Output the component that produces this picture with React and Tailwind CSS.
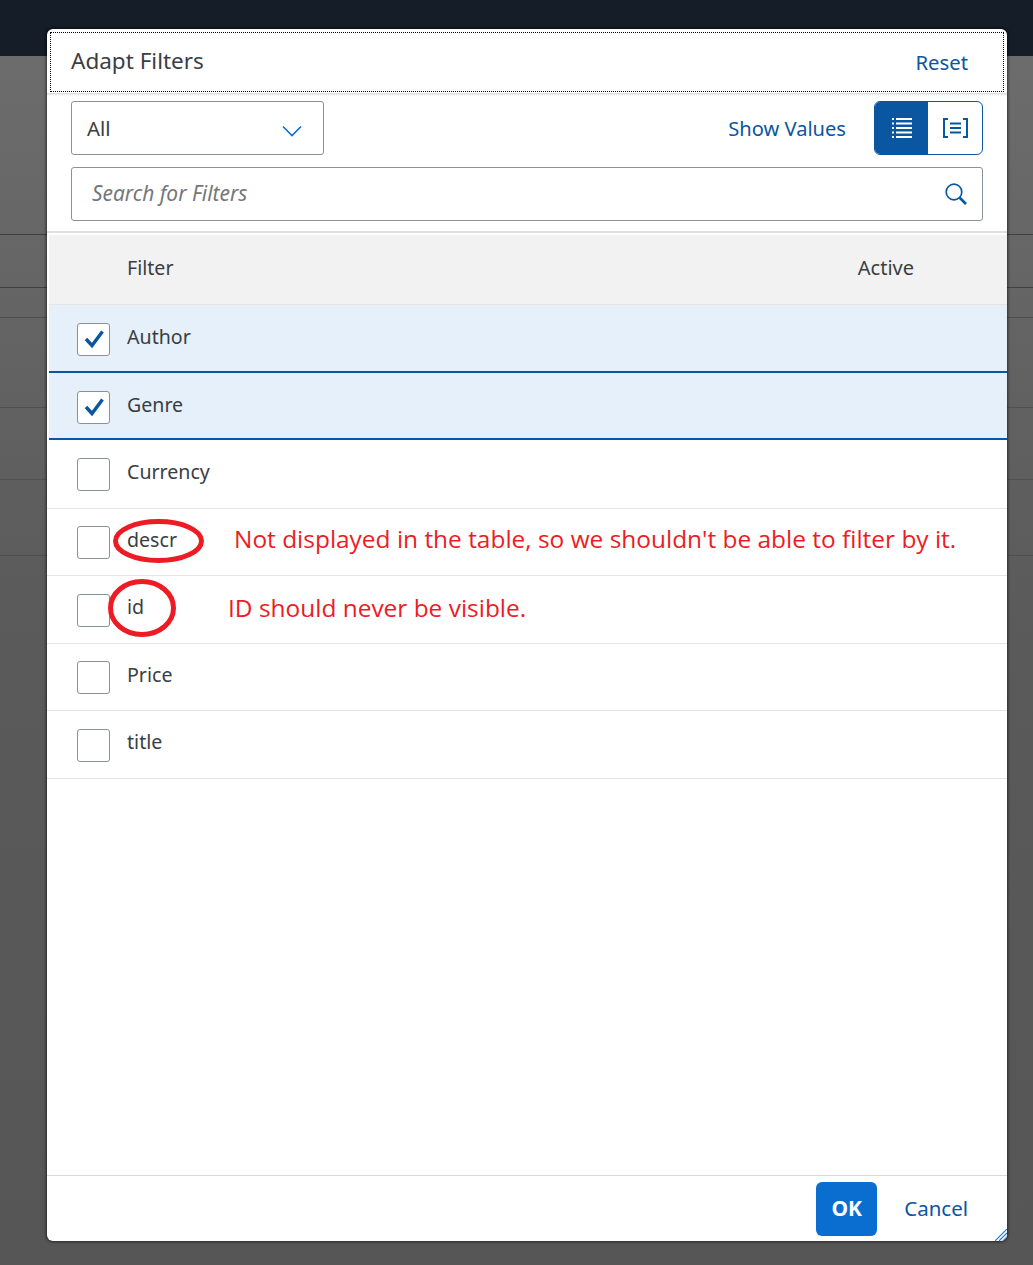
import React from "react";

const F = "[font-family:'Noto_Sans','Open_Sans',sans-serif]";

function Check({ on }) {
  return (
    <div className={`w-[33px] h-[33px] shrink-0 rounded-[3px] border border-[#89919a] bg-white flex items-center justify-center ${on ? "mt-[3px]" : "mt-[1px]"}`}>
      {on && (
        <svg width="22" height="22" viewBox="0 0 22 22" fill="none">
          <path d="M3 11 L9 17.5 L19.5 3.5" stroke="#0a56a0" strokeWidth="3.4" />
        </svg>
      )}
    </div>
  );
}

function Row({ label, on, h, children }) {
  return (
    <div
      className={`relative flex items-center text-[19.6px] text-[#3a3e42] ${h} ${
        on ? "ml-[2px] pl-[28px] bg-[#e5f0fa] border-b-2 border-[#0a56a0]" : "pl-[30px] border-b border-[#e5e5e5]"
      }`}
    >
      <Check on={on} />
      <span className={`ml-[17px] ${on ? "-mt-[2px]" : "-mt-[6px]"}`}>{label}</span>
      {children}
    </div>
  );
}

export default function App() {
  return (
    <div className={`relative w-[1033px] h-[1265px] overflow-hidden bg-gradient-to-b from-[#6e6e6e] via-[#5a5a5a] to-[#565656] ${F}`}>
      <div className="h-[56px] bg-[#141d28]" />
      <div className="h-[179px] border-b border-[#3e4042]" />
      <div className="h-[53px] border-b border-[#3e4042]" />
      <div className="h-[30px] border-b border-[#4d4d4d]" />
      <div className="h-[90px] border-b border-[#505050]" />
      <div className="h-[72px] border-b border-[#505050]" />
      <div className="h-[76px] border-b border-[#505050]" />

      <div className="absolute left-[47px] top-[29px] w-[960px] h-[1212px] bg-white rounded-[6px] shadow-[0_0_3px_1px_rgba(0,0,0,0.55)] flex flex-col overflow-hidden">
        <div className="h-[60px] shrink-0 mx-[3px] mt-[3px] border border-dotted border-black flex items-center justify-between pl-[20px] pr-[35px]">
          <span className="text-[22.5px] text-[#3a3e42] -mt-[2px]">Adapt Filters</span>
          <span className="text-[20.3px] text-[#0a56a0]">Reset</span>
        </div>
        <div className="h-[3px] shrink-0 mt-[1px] bg-gradient-to-b from-[#d9d9d9] to-white" />

        <div className="flex items-center justify-between px-[24px] mt-[5px]">
          <div className="w-[253px] h-[54px] rounded-[3px] border border-[#89919a] flex items-center justify-between pl-[15px] pr-[21px]">
            <span className="text-[20.4px] text-[#3a3e42]">All</span>
            <svg width="20" height="12" viewBox="0 0 20 12" fill="none" className="mt-[5px]">
              <path d="M1 1.5 L10 10.5 L19 1.5" stroke="#0a6ed1" strokeWidth="1.6" />
            </svg>
          </div>
          <div className="flex items-center">
            <span className="text-[20.1px] text-[#0a56a0] mr-[28px] mt-[3px]">Show Values</span>
            <div className="flex h-[54px] w-[109px] rounded-[6px] border border-[#0a56a0] overflow-hidden">
              <div className="w-[53px] bg-[#0a56a0] flex items-center justify-center">
                <svg width="20" height="20" viewBox="0 0 20 20" fill="#fff">
                  <rect x="0" y="0" width="2" height="2" />
                  <rect x="4" y="0" width="16" height="2" />
                  <rect x="0" y="4.5" width="2" height="2" />
                  <rect x="4" y="4.5" width="16" height="2" />
                  <rect x="0" y="9" width="2" height="2" />
                  <rect x="4" y="9" width="16" height="2" />
                  <rect x="0" y="13.5" width="2" height="2" />
                  <rect x="4" y="13.5" width="16" height="2" />
                  <rect x="0" y="18" width="2" height="2" />
                  <rect x="4" y="18" width="16" height="2" />
                </svg>
              </div>
              <div className="flex-1 flex items-center justify-center">
                <svg width="25" height="20" viewBox="0 0 25 20" fill="none" stroke="#0a56a0" strokeWidth="2">
                  <path d="M5 1 H1 V19 H5" />
                  <path d="M20 1 H24 V19 H20" />
                  <path d="M7 5.5 H18 M7 10 H18 M7 14.5 H18" />
                </svg>
              </div>
            </div>
          </div>
        </div>

        <div className="mx-[24px] mt-[12px] h-[54px] shrink-0 rounded-[3px] border border-[#89919a] flex items-center justify-between pl-[20px] pr-[15px]">
          <span className="text-[20.9px] italic text-[#74777a]">Search for Filters</span>
          <svg width="22" height="22" viewBox="0 0 22 22" fill="none" stroke="#0a56a0">
            <circle cx="9" cy="9" r="7.8" strokeWidth="1.7" />
            <path d="M14.5 14.5 L21 21" strokeWidth="2.6" />
          </svg>
        </div>

        <div className="mt-[10px] h-[2px] shrink-0 bg-[#e0e0e0]" />
        <div className="mt-[2px] ml-[2px] h-[70px] shrink-0 bg-[#f2f2f2] border-b border-[#e5e5e5] flex items-center justify-between pl-[78px] pr-[93px] text-[19.6px] text-[#3a3e42]">
          <span className="-mt-[3px]">Filter</span>
          <span className="-mt-[3px] text-[20px]">Active</span>
        </div>

        <Row label="Author" on h="h-[67.7px]" />
        <Row label="Genre" on h="h-[67.7px]" />
        <Row label="Currency" h="h-[69px]" />
        <Row label="descr" h="h-[67px]">
          <svg className="absolute left-[66px] top-[10px]" width="91" height="44" viewBox="0 0 91 44" fill="none">
            <ellipse cx="45.5" cy="22" rx="43" ry="19.5" stroke="#ed1c24" strokeWidth="5" />
          </svg>
          <span className="absolute left-[187px] top-[13px] text-[24.45px] leading-[34px] text-[#ed1c24] [font-family:'Open_Sans',sans-serif]">
            Not displayed in the table, so we shouldn't be able to filter by it.
          </span>
        </Row>
        <Row label="id" h="h-[68px]">
          <svg className="absolute left-[61px] top-[3px]" width="68" height="58" viewBox="0 0 68 58" fill="none">
            <ellipse cx="34" cy="29" rx="31.5" ry="26.5" stroke="#ed1c24" strokeWidth="5" />
          </svg>
          <span className="absolute left-[181px] top-[15px] text-[24.45px] leading-[34px] text-[#ed1c24] [font-family:'Open_Sans',sans-serif]">
            ID should never be visible.
          </span>
        </Row>
        <Row label="Price" h="h-[67px]" />
        <Row label="title" h="h-[67.6px]" />

        <div className="flex-1" />

        <div className="relative h-[66px] shrink-0 border-t border-[#d9d9d9] flex items-center justify-end pr-[39px]">
          <div className="w-[61px] h-[54px] rounded-[6px] bg-[#0a6ed1] flex items-center justify-center text-[21px] font-bold text-white mr-[27px]">OK</div>
          <span className="text-[20.5px] text-[#0a56a0]">Cancel</span>
          <svg className="absolute right-0 bottom-0" width="12" height="12" viewBox="0 0 12 12" fill="none" stroke="#2a78c8" strokeWidth="1.2">
            <path d="M0 12 L12 0 M4 12 L12 4 M8 12 L12 8" />
          </svg>
        </div>
      </div>
    </div>
  );
}
